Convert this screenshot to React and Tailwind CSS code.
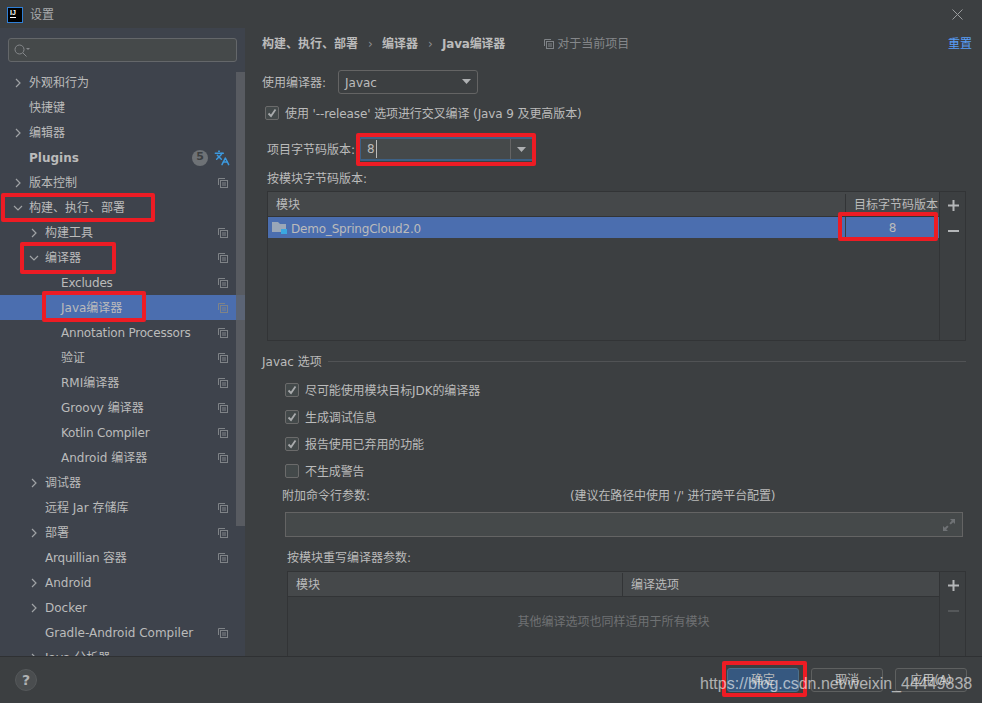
import React from 'react';
import { Languages } from 'lucide-react';

const FONT = '"DejaVu Sans", "Noto Sans CJK SC", sans-serif';

const NAV_ITEMS = [
    { label: '外观和行为', level: 0, arrow: 'right' },
    { label: '快捷键', level: 0 },
    { label: '编辑器', level: 0, arrow: 'right' },
    { label: 'Plugins', level: 0, bold: true, plugins: true },
    { label: '版本控制', level: 0, arrow: 'right', copy: true },
    { label: '构建、执行、部署', level: 0, arrow: 'down' },
    { label: '构建工具', level: 1, arrow: 'right', copy: true },
    { label: '编译器', level: 1, arrow: 'down', copy: true },
    { label: 'Excludes', level: 2, copy: true, tight: true },
    { label: 'Java编译器', level: 2, copy: true, selected: true },
    { label: 'Annotation Processors', level: 2, copy: true, tight: true },
    { label: '验证', level: 2, copy: true },
    { label: 'RMI编译器', level: 2, copy: true },
    { label: 'Groovy 编译器', level: 2, copy: true },
    { label: 'Kotlin Compiler', level: 2, copy: true, tight: true },
    { label: 'Android 编译器', level: 2, copy: true },
    { label: '调试器', level: 1, arrow: 'right' },
    { label: '远程 Jar 存储库', level: 1, copy: true },
    { label: '部署', level: 1, arrow: 'right', copy: true },
    { label: 'Arquillian 容器', level: 1, copy: true, tight: true },
    { label: 'Android', level: 1, arrow: 'right' },
    { label: 'Docker', level: 1, arrow: 'right' },
    { label: 'Gradle-Android Compiler', level: 1, copy: true },
    { label: 'Java 分析器', level: 1, arrow: 'right' },
];

const LEVEL_PADDING = { 0: 'pl-[13px]', 1: 'pl-[29px]', 2: 'pl-[45px]' };

function CopyIcon({ className = '' }) {
    return (
        <svg width="10" height="10" viewBox="0 0 10 10" fill="none" stroke="#7f8387" strokeWidth="1" className={className}>
            <path d="M.5 7V.5H7" />
            <rect x="2.5" y="2.5" width="7" height="7" />
            <path d="M4 5h4M4 7h4" />
        </svg>
    );
}

function Chevron({ dir }) {
    return (
        <svg width="10" height="10" viewBox="0 0 10 10" fill="none" stroke="#a0a3a6" strokeWidth="1.2">
            {dir === 'right' ? <path d="M3 1l4 4-4 4" /> : <path d="M1 3l4 4 4-4" />}
        </svg>
    );
}

function Caret() {
    return (
        <svg width="9" height="5" viewBox="0 0 9 5" fill="#aeb0b2">
            <path d="M0 0h9L4.500 5z" />
        </svg>
    );
}

function Checkbox({ checked }) {
    return (
        <span className="flex h-[14px] w-[14px] shrink-0 items-center justify-center rounded-[2px] border border-[#6b6b6b] bg-[#43494a]">
            {checked && (
                <svg width="10" height="10" viewBox="0 0 10 10" fill="none" stroke="#a9abad" strokeWidth="1.800">
                    <path d="M1.500 5.500l2.500 2.500L8.500 1.500" />
                </svg>
            )}
        </span>
    );
}

function CheckRow({ checked, children, className = '' }) {
    return (
        <div className={`flex h-[20px] items-center gap-[6px] ${className}`}>
            <Checkbox checked={checked} />
            <span className="pt-[2px] tracking-[-0.1px]">{children}</span>
        </div>
    );
}

function TableTools({ minusDim }) {
    return (
        <div className="flex w-[25px] shrink-0 flex-col items-center pt-[8px]">
            <svg width="11" height="11" viewBox="0 0 11 11" fill="#b4b6b8" className="ml-[1px]"><path d="M4.500 0h2v4.500H11v2H6.500V11h-2V6.500H0v-2h4.500z" /></svg>
            <svg width="11" height="2" viewBox="0 0 11 2" className="ml-[1px] mt-[19px]" fill={minusDim ? '#55585a' : '#b4b6b8'}><path d="M0 0h11v2H0z" /></svg>
        </div>
    );
}

function NavRow({ item }) {
    return (
        <div className={`flex h-[25px] shrink-0 items-center pr-[17px] ${LEVEL_PADDING[item.level]} ${item.selected ? 'bg-[#4b6eaf]' : ''}`}>
            <span className="flex w-[16px] shrink-0 items-center">
                {item.arrow && <Chevron dir={item.arrow} />}
            </span>
            <span className={`flex-1 whitespace-nowrap ${item.bold ? 'font-bold' : ''} ${item.tight ? 'tracking-[-0.2px]' : ''}`}>{item.label}</span>
            {item.plugins && (
                <span className="mr-[6px] flex h-[16px] w-[16px] items-center justify-center rounded-full bg-[#6e7276] text-[11px] font-bold text-[#3c3f41]">5</span>
            )}
            {item.plugins && <Languages size={16} color="#3c9ae0" strokeWidth={2.2} className="-mr-[2px]" />}
            {item.copy && <CopyIcon />}
        </div>
    );
}

function Sidebar() {
    return (
        <aside className="relative flex w-[245px] shrink-0 flex-col overflow-hidden bg-[#3e434c]">
            <div className="mx-[8px] mt-[10px] flex h-[24px] w-[229px] shrink-0 items-center rounded-[3px] border border-[#64676a] bg-[#45494a] pl-[5px]">
                <svg width="16" height="13" viewBox="0 0 16 13" fill="none" stroke="#85888b" strokeWidth="1">
                    <circle cx="5.500" cy="5.500" r="4.500" />
                    <path d="M9 9l3.500 3.500" />
                    <path d="M12 4h4l-2 2z" fill="#85888b" stroke="none" />
                </svg>
            </div>
            <nav className="mt-[8px] flex min-h-0 flex-1 flex-col overflow-hidden">
                {NAV_ITEMS.map((item) => <NavRow key={item.label} item={item} />)}
            </nav>
            {/* scrollbar thumb sits over the list */}
            <div className="absolute right-0 top-[44px] h-[454px] w-[9px] bg-[#5f6266] opacity-80" />
        </aside>
    );
}

function ModuleBytecodeTable() {
    return (
        <div className="ml-[5px] mt-[3px] flex h-[150px] shrink-0 border border-[#323436]">
            <div className="flex min-w-0 flex-1 flex-col border-r border-[#323436]">
                <div className="flex h-[25px] shrink-0 items-center border-b border-[#323436] bg-[#45484a] pt-[2px]">
                    <span className="flex-1 pl-[8px]">模块</span>
                    <span className="flex h-full w-[94px] items-center border-l border-[#323436] pl-[8px]">目标字节码版本</span>
                </div>
                <div className="flex h-[21px] shrink-0 items-center bg-[#4b6eaf]">
                    <span className="flex flex-1 items-center gap-[4px] pl-[4px]">
                        <svg width="15" height="13" viewBox="0 0 15 13">
                            <path d="M0 1h6l2 2h6v8H0z" fill="#9aa7b8" />
                            <rect x="9" y="8" width="6" height="5" fill="#3aa7e0" />
                        </svg>
                        <span className="pt-[2px] tracking-[-0.2px]">Demo_SpringCloud2.0</span>
                    </span>
                    <span className="flex h-full w-[94px] items-center justify-center border-l border-[#3c3f41]">8</span>
                </div>
            </div>
            <TableTools />
        </div>
    );
}

function OverrideTable() {
    return (
        <div className="ml-[25px] mt-[4px] flex min-h-0 flex-1 border-x border-t border-[#323436]">
            <div className="flex min-w-0 flex-1 flex-col border-r border-[#323436]">
                <div className="flex h-[25px] shrink-0 items-center border-b border-[#323436] bg-[#45484a] pt-[1px]">
                    <span className="w-[334px] pl-[8px]">模块</span>
                    <span className="flex h-full flex-1 items-center border-l border-[#323436] pl-[8px]">编译选项</span>
                </div>
                <div className="flex flex-1 items-center justify-center pb-[9px] text-[#6f7173]">其他编译选项也同样适用于所有模块</div>
            </div>
            <TableTools minusDim />
        </div>
    );
}

function SettingsPanel() {
    return (
        <main className="flex min-w-0 flex-1 flex-col overflow-hidden pl-[17px] pr-[16px]">
            <div className="mt-[6px] flex h-[20px] shrink-0 items-center">
                <span className="font-bold">构建、执行、部署</span>
                <span className="ml-[10px] mr-[6px] w-[8px] text-[#8c8f91]">›</span>
                <span className="font-bold">编译器</span>
                <span className="ml-[10px] mr-[6px] w-[8px] text-[#8c8f91]">›</span>
                <span className="font-bold tracking-[-0.2px]">Java编译器</span>
                <CopyIcon className="ml-[39px]" />
                <span className="ml-[3px] text-[#85878a]">对于当前项目</span>
                <span className="-mr-[6px] ml-auto text-[#589df6]">重置</span>
            </div>

            <div className="mt-[16px] flex h-[23px] shrink-0 items-center">
                <span className="w-[76px] pt-[2px]">使用编译器:</span>
                <div className="flex h-[24px] w-[140px] items-center justify-between rounded-[3px] border border-[#646464] bg-[#3c3f41] pl-[6px] pr-[6px]">
                    <span className="pt-[2px]">Javac</span>
                    <Caret />
                </div>
            </div>

            <CheckRow checked className="ml-[3px] mt-[10px] shrink-0">使用 '--release' 选项进行交叉编译 (Java 9 及更高版本)</CheckRow>

            <div className="ml-[5px] mt-[14px] flex h-[24px] shrink-0 items-center">
                <span className="w-[92px] whitespace-nowrap pt-[2px]">项目字节码版本:</span>
                <div className="flex h-[24px] w-[175px] items-center rounded-[2px] border-2 border-[#3d6185] bg-[#45494a] pl-[6px]">
                    <span className="border-r border-[#bbbbbb] pr-[1px]">8</span>
                    <span className="ml-auto flex h-full w-[22px] items-center justify-center border-l border-[#646464]"><Caret /></span>
                </div>
            </div>

            <div className="ml-[5px] mt-[7px] flex h-[20px] shrink-0 items-center pt-[2px]">按模块字节码版本:</div>
            <ModuleBytecodeTable />

            <div className="mt-[10px] flex h-[20px] shrink-0 items-center gap-[6px]">
                <span className="pt-[2px]">Javac 选项</span>
                <span className="h-px flex-1 bg-[#515355]" />
            </div>

            <div className="ml-[23px] mt-[9px] flex shrink-0 flex-col gap-[7px]">
                <CheckRow checked>尽可能使用模块目标JDK的编译器</CheckRow>
                <CheckRow checked>生成调试信息</CheckRow>
                <CheckRow checked>报告使用已弃用的功能</CheckRow>
                <CheckRow>不生成警告</CheckRow>
            </div>

            <div className="ml-[20px] mt-[4px] flex h-[20px] shrink-0 items-center pt-[2px]">
                <span className="w-[288px]">附加命令行参数:</span>
                <span className="tracking-[-0.1px]">(建议在路径中使用 '/' 进行跨平台配置)</span>
            </div>

            <div className="ml-[23px] mr-[3px] mt-[7px] flex h-[25px] shrink-0 items-center justify-end border border-[#646464] bg-[#45494a] pr-[7px]">
                <svg width="12" height="12" viewBox="0 0 12 12" fill="#6f7275">
                    <path d="M7 0h5v5l-1.800-1.800-2.400 2.400-1.400-1.400 2.400-2.400zM0 12V7l1.800 1.800 2.400-2.400 1.400 1.400-2.400 2.400L5 12z" />
                </svg>
            </div>

            <div className="ml-[25px] mt-[10px] flex h-[20px] shrink-0 items-center pt-[2px]">按模块重写编译器参数:</div>
            <OverrideTable />
        </main>
    );
}

function FooterButton({ primary, children }) {
    return (
        <div className={`flex h-[24px] w-[72px] items-center justify-center rounded-[3px] border ${primary ? 'border-[#4c708c] bg-[#365880]' : 'border-[#5e6060] bg-[#3f4244]'}`}>
            {children}
        </div>
    );
}

const RED_BOX = 'absolute rounded-[2px] border-4 border-[#ed1c24]';

export default function App() {
    return (
        <div className="relative flex h-[703px] w-[982px] flex-col overflow-hidden bg-[#3c3f41] text-[12px] text-[#bbbbbb]" style={{ fontFamily: FONT }}>
            <header className="flex h-[28px] shrink-0 items-center pl-[7px] pr-[19px] pt-[1px]">
                <div className="flex h-[16px] w-[16px] flex-col items-start border border-[#2f7fd6] bg-black pl-[2px] pt-[1px] text-[7px] font-bold leading-[7px] text-white" style={{ fontFamily: '"Liberation Sans", sans-serif' }}>
                    IJ
                    <span className="mt-[1px] h-px w-[6px] bg-white" />
                </div>
                <span className="ml-[7px] pt-[1px] text-[#a8aaac]">设置</span>
                <svg width="11" height="11" viewBox="0 0 11 11" stroke="#9a9c9e" strokeWidth="1" className="ml-auto">
                    <path d="M.5.500l10 10M10.500.500l-10 10" />
                </svg>
            </header>

            <div className="flex min-h-0 flex-1">
                <Sidebar />
                <SettingsPanel />
            </div>

            <footer className="flex h-[47px] shrink-0 items-center border-t border-[#2f3133] pl-[15px] pr-[15px]">
                <span className="flex h-[22px] w-[22px] items-center justify-center rounded-full border border-[#55585a] bg-[#4a4d4f] text-[14px] font-bold text-[#b0b2b4]">?</span>
                <div className="ml-auto flex gap-[12px]">
                    <FooterButton primary>确定</FooterButton>
                    <FooterButton>取消</FooterButton>
                    <FooterButton>应用(A)</FooterButton>
                </div>
            </footer>

            {/* annotations drawn over the screenshot */}
            <div className={`${RED_BOX} left-[1px] top-[193px] h-[29px] w-[154px]`} />
            <div className={`${RED_BOX} left-[20px] top-[242px] h-[32px] w-[96px]`} />
            <div className={`${RED_BOX} left-[42px] top-[291px] h-[31px] w-[104px]`} />
            <div className={`${RED_BOX} left-[356px] top-[133px] h-[33px] w-[180px]`} />
            <div className={`${RED_BOX} left-[838px] top-[212px] h-[29px] w-[100px]`} />
            <div className={`${RED_BOX} left-[722px] top-[661px] h-[36px] w-[85px]`} />
            <span className="absolute left-[700px] top-[672px] whitespace-nowrap text-[16px] text-white/60" style={{ fontFamily: '"Liberation Sans", sans-serif' }}>
                https://blog.csdn.net/weixin_44449838
            </span>
        </div>
    );
}
